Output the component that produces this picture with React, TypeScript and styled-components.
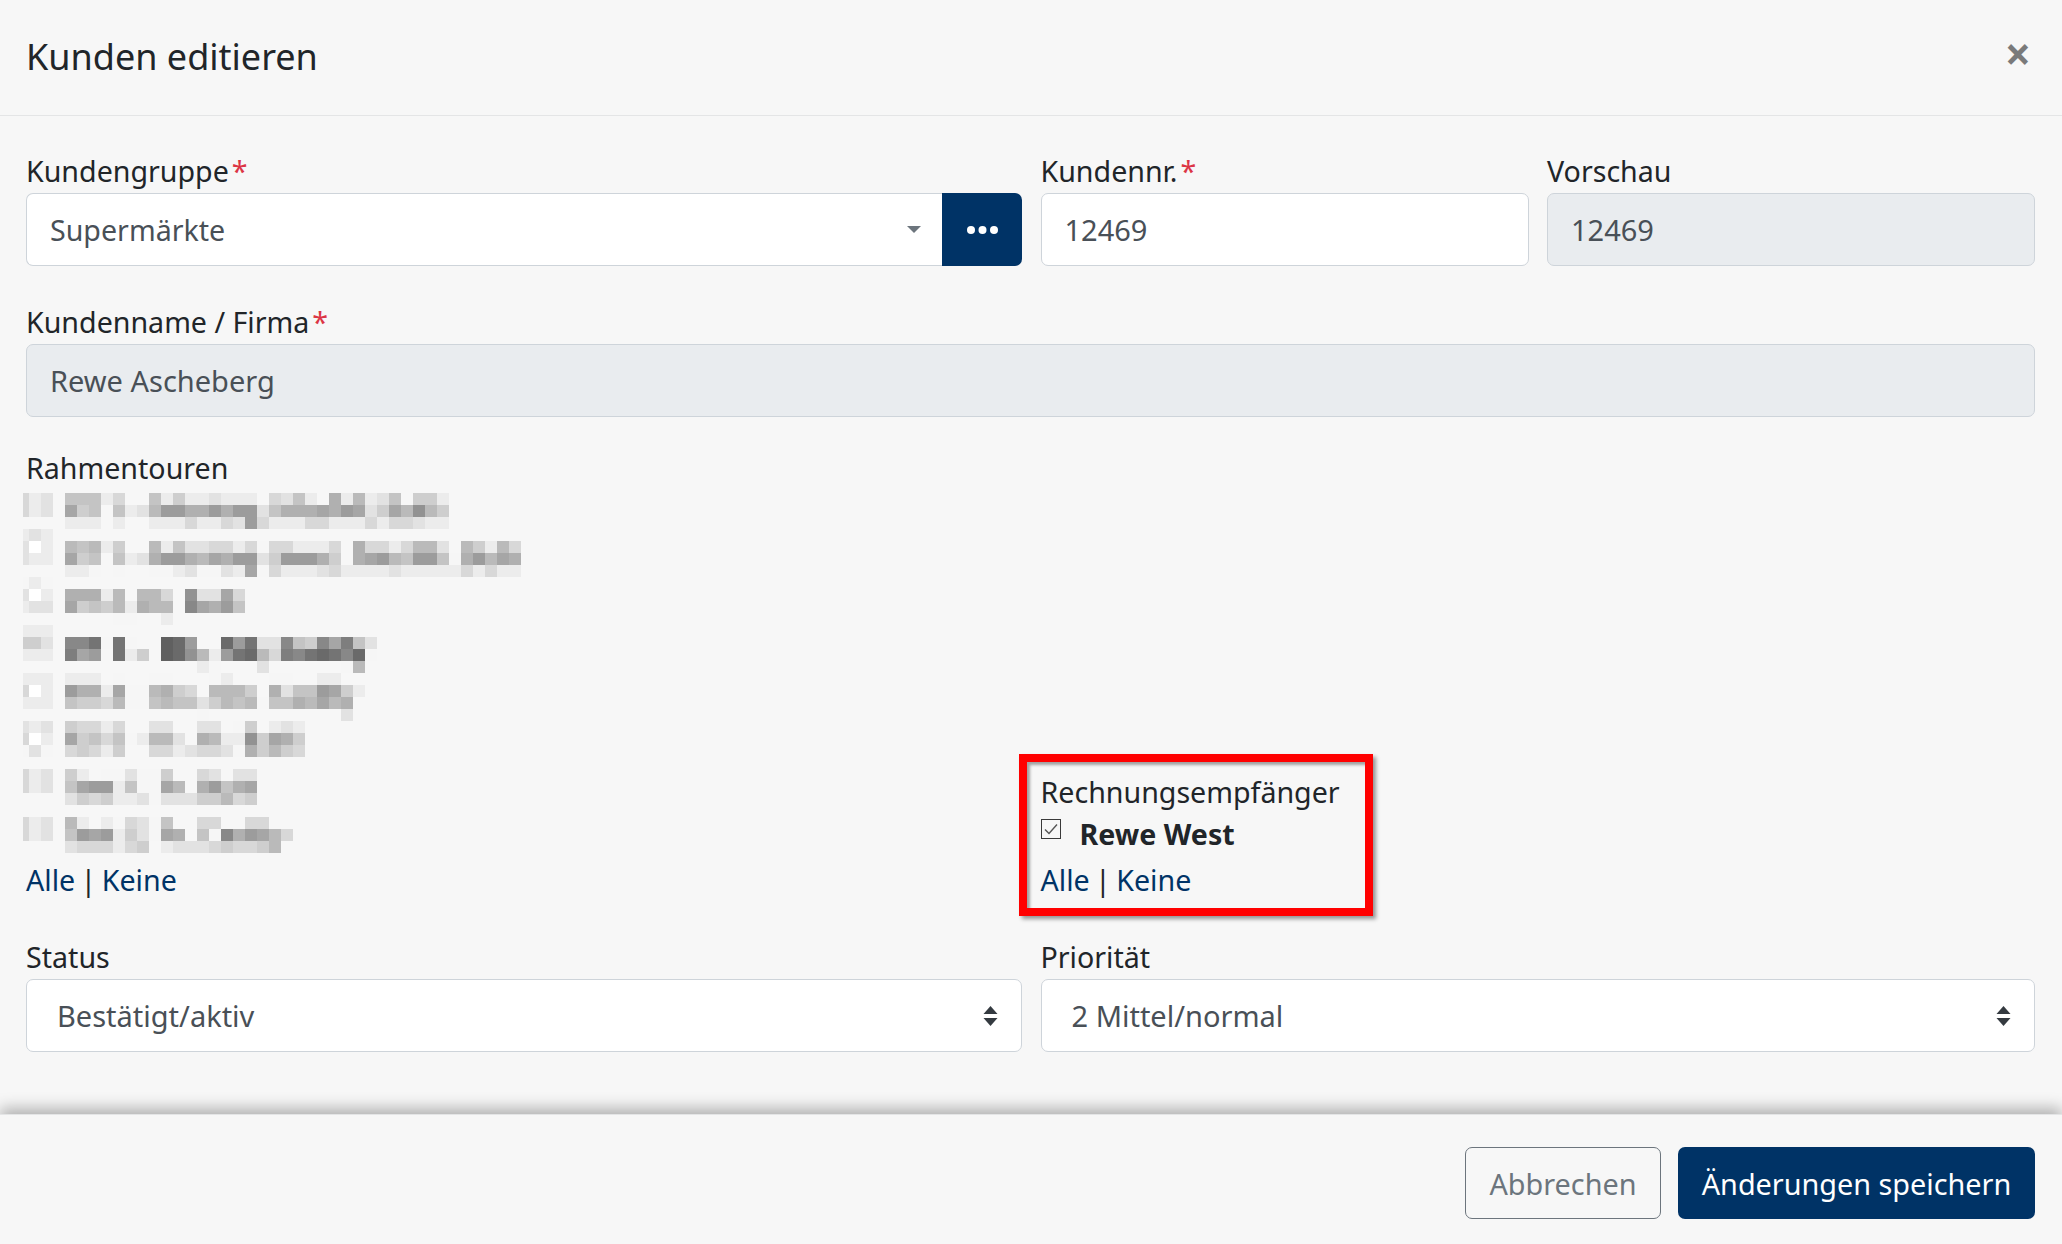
import styled, { createGlobalStyle } from "styled-components";

const GlobalStyle = createGlobalStyle`
   * {
      box-sizing: border-box;
   }
   html,
   body {
      margin: 0;
      height: 100%;
      background: #f7f7f7;
   }
   body {
      font-family: "Noto Sans", "Open Sans", sans-serif;
      font-size: 28.6px;
      line-height: 45px;
      color: #212529;
      overflow: hidden;
   }
`;

const Modal = styled.div`
   display: flex;
   flex-direction: column;
   height: 1244px;
`;

const Header = styled.header`
   display: flex;
   justify-content: space-between;
   align-items: flex-start;
   height: 116px;
   padding: 29px 27px 0 26px;
   border-bottom: 1px solid #e4e5e6;
`;

const Title = styled.h1`
   margin: 0;
   font-size: 36px;
   font-weight: 400;
   line-height: 56px;
`;

const CloseButton = styled.button`
   border: 0;
   padding: 0;
   margin: -4px 4px 0 0;
   background: none;
   font-family: "Noto Sans", sans-serif;
   font-size: 46px;
   font-weight: 700;
   line-height: 56px;
   color: #000;
   opacity: 0.5;
`;

const Body = styled.main`
   flex: 1;
   padding: 25px 27px 0 26px;
`;

const TopRow = styled.div`
   display: grid;
   grid-template-columns: 996px 488px 488px;
   column-gap: 18.5px;
   margin-bottom: 26px;
`;

const Label = styled.label`
   display: block;
   height: 52px;
   padding-top: 7px;
`;

const CompactLabel = styled(Label)`
   height: 50px;
   padding-top: 2px;
`;

const RecipientLabel = styled(Label)`
   height: 50px;
   padding-top: 8px;
`;

const Required = styled.span`
   margin-left: 3px;
   color: #dc3545;
`;

const Field = styled.div<{ $disabled?: boolean; $wide?: boolean }>`
   display: flex;
   align-items: center;
   justify-content: space-between;
   height: 73px;
   padding: 0 ${(p) => (p.$wide ? "23px 0 30px" : "23px")};
   border: 1.5px solid #ced4da;
   border-radius: 7px;
   background: ${(p) => (p.$disabled ? "#e9ecef" : "#fff")};
   color: #495057;
   font-size: 29px;
`;

const FieldSpaced = styled.div`
   margin-bottom: 26px;
`;

const ComboRow = styled.div`
   display: flex;
`;

const ComboField = styled(Field)`
   flex: 1;
   border-right: 0;
   border-radius: 7px 0 0 7px;
   padding-right: 21px;
   font-size: 28.6px;
`;

const Caret = styled.span`
   width: 0;
   height: 0;
   border-style: solid;
   border-width: 7px 7px 0;
   border-color: #6c757d transparent transparent;
`;

const DotsButton = styled.button`
   display: flex;
   align-items: center;
   justify-content: center;
   width: 80px;
   height: 73px;
   padding: 0;
   border: 0;
   border-radius: 0 7px 7px 0;
   background: #003366;
`;

const Mosaic = styled.svg`
   display: block;
   margin-left: -3px;
   shape-rendering: crispEdges;
`;

const ToursRow = styled.div`
   display: grid;
   grid-template-columns: 996px 994.5px;
   column-gap: 18.5px;
   align-items: end;
   margin-bottom: 25px;
`;

const RecipientCell = styled.div`
   position: relative;
`;

const Highlight = styled.div`
   position: absolute;
   left: -21.5px;
   top: -7px;
   width: 354px;
   height: 162px;
   border: 8px solid #ff0000;
   box-shadow: 3px 3px 4px rgba(0, 0, 0, 0.4), inset 3px 3px 3px rgba(0, 0, 0, 0.35);
   pointer-events: none;
`;

const CheckRow = styled.div`
   display: flex;
   align-items: center;
   height: 45px;
   margin-bottom: -3px;
`;

const Check = styled.svg`
   flex: none;
   margin: -10px 19px 0 0;
`;

const Strong = styled.span`
   font-weight: 700;
`;

const Links = styled.div`
   height: 45px;
   margin-top: 4px;
   word-spacing: -2px;
`;

const LinkText = styled.a`
   color: #003366;
`;

const BottomRow = styled.div`
   display: grid;
   grid-template-columns: 996px 994.5px;
   column-gap: 18.5px;
`;

const Spinner = styled.svg`
   flex: none;
`;

const Footer = styled.footer`
   position: relative;
   display: flex;
   justify-content: flex-end;
   gap: 17px;
   height: 130px;
   padding: 32px 27px 0 0;
   background: #f7f7f7;
   border-top: 1px solid #e4e5e6;
   box-shadow: 0 -6px 14px rgba(0, 0, 0, 0.28);
`;

const Button = styled.button`
   height: 72px;
   padding: 0;
   border-radius: 7px;
   font-family: "Noto Sans", "Open Sans", sans-serif;
   font-size: 28.8px;
   line-height: 45px;
   white-space: nowrap;
`;

const CancelButton = styled(Button)`
   width: 196px;
   border: 1.5px solid #6c757d;
   background: transparent;
   color: #6c757d;
`;

const SaveButton = styled(Button)`
   width: 357px;
   border: 0;
   background: #003366;
   color: #fff;
`;

// blurred rows of the picture: one char per 12px cell, first char is the cut-off 6px column
const mosaicRows = [
   "ced.aaaec..aebeedeee.cdae.8e9eda.bbe",
   "ced.7ba.aed966886866da8887867db7959b",
   "....eee.e..eeeceecd6ceeecceeececcdee",
   "ede",
   "dwe.9a9eb..9eaddccecfcceeec.8ccec99d.9be9c",
   "dee.7ba.aed866897866db6668b.8769a66af86978",
   "....eef.f..ffedffde7fceeedceeeedeeeeececee",
   "fef",
   "dwe.888e9.99c.5dd7c",
   "edd.7bab9e899.4786a",
   "........ff..e",
   "eee",
   "bbd.442f2f..016..162dd4ab473ad",
   "eee.376.2eb.0159e6219c3421241f",
   "...............ef...d......f9",
   "eee.eee.f..ff...fe...ff..ee",
   "cwe.688e7ff98bc.999b.8daa67be",
   "eee.abbc9ffa9aadb9a9faa89798",
   "...............f...........d",
   "ded.bccec..dd..dd.fb.ede",
   "cwe.7bacafe99d.89ee5b78b",
   "fdf.cbceb..ccedccdf8b9bc",
   "",
   "ced.be.ffdffb..cd.dd",
   "ced.a766eaff79.86a87",
   "....dbcbeedfdddbb9cb",
   "",
   "ced.9e.efcdfa..cc..cc",
   "ced.a676ebdf78.af48679c",
   "....dcccecb.edddcbccb9",
];

const cellColor = (c: string) => {
   if (c === "w") return "#ffffff";
   const v = 96 + parseInt(c, 16) * 10;
   return `rgb(${v},${v},${v})`;
};

const BlurredTours = () => (
   <Mosaic width="498" height="360" viewBox="0 0 498 360">
      {mosaicRows.map((row, y) =>
         row.split("").map((c, x) =>
            c === "." ? null : (
               <rect
                  key={`${y}-${x}`}
                  x={x === 0 ? 0 : 6 + (x - 1) * 12}
                  y={y * 12}
                  width={x === 0 ? 6 : 12}
                  height="12"
                  fill={cellColor(c)}
               />
            )
         )
      )}
   </Mosaic>
);

const SpinnerIcon = () => (
   <Spinner width="15" height="20" viewBox="0 0 15 20">
      <path d="M7.5 0 L14.5 8 H0.5 Z M0.5 12 H14.5 L7.5 20 Z" fill="#343a40" />
   </Spinner>
);

const AllNone = () => (
   <Links>
      <LinkText>Alle</LinkText> | <LinkText>Keine</LinkText>
   </Links>
);

const App = () => (
   <>
      <GlobalStyle />
      <Modal>
         <Header>
            <Title>Kunden editieren</Title>
            <CloseButton>×</CloseButton>
         </Header>
         <Body>
            <TopRow>
               <div>
                  <Label>
                     Kundengruppe<Required>*</Required>
                  </Label>
                  <ComboRow>
                     <ComboField>
                        Supermärkte
                        <Caret />
                     </ComboField>
                     <DotsButton>
                        <svg width="31" height="8" viewBox="0 0 31 8">
                           <circle cx="4" cy="4" r="4" fill="#fff" />
                           <circle cx="15.5" cy="4" r="4" fill="#fff" />
                           <circle cx="27" cy="4" r="4" fill="#fff" />
                        </svg>
                     </DotsButton>
                  </ComboRow>
               </div>
               <div>
                  <Label>
                     Kundennr.<Required>*</Required>
                  </Label>
                  <Field>12469</Field>
               </div>
               <div>
                  <Label>Vorschau</Label>
                  <Field $disabled>12469</Field>
               </div>
            </TopRow>
            <FieldSpaced>
               <Label>
                  Kundenname / Firma<Required>*</Required>
               </Label>
               <Field $disabled>Rewe Ascheberg</Field>
            </FieldSpaced>
            <ToursRow>
               <div>
                  <CompactLabel>Rahmentouren</CompactLabel>
                  <BlurredTours />
                  <AllNone />
               </div>
               <RecipientCell>
                  <Highlight />
                  <RecipientLabel>Rechnungsempfänger</RecipientLabel>
                  <CheckRow>
                     <Check width="20" height="20" viewBox="0 0 20 20">
                        <rect x="0.5" y="0.5" width="19" height="19" fill="#f7f7f7" stroke="#3a3a3a" />
                        <path d="M4 10.5 L8 14.5 L16 5.5" fill="none" stroke="#555" strokeWidth="1.4" />
                     </Check>
                     <Strong>Rewe West</Strong>
                  </CheckRow>
                  <AllNone />
               </RecipientCell>
            </ToursRow>
            <BottomRow>
               <div>
                  <Label>Status</Label>
                  <Field $wide>
                     Bestätigt/aktiv
                     <SpinnerIcon />
                  </Field>
               </div>
               <div>
                  <Label>Priorität</Label>
                  <Field $wide>
                     2 Mittel/normal
                     <SpinnerIcon />
                  </Field>
               </div>
            </BottomRow>
         </Body>
         <Footer>
            <CancelButton>Abbrechen</CancelButton>
            <SaveButton>Änderungen speichern</SaveButton>
         </Footer>
      </Modal>
   </>
);

export default App;
